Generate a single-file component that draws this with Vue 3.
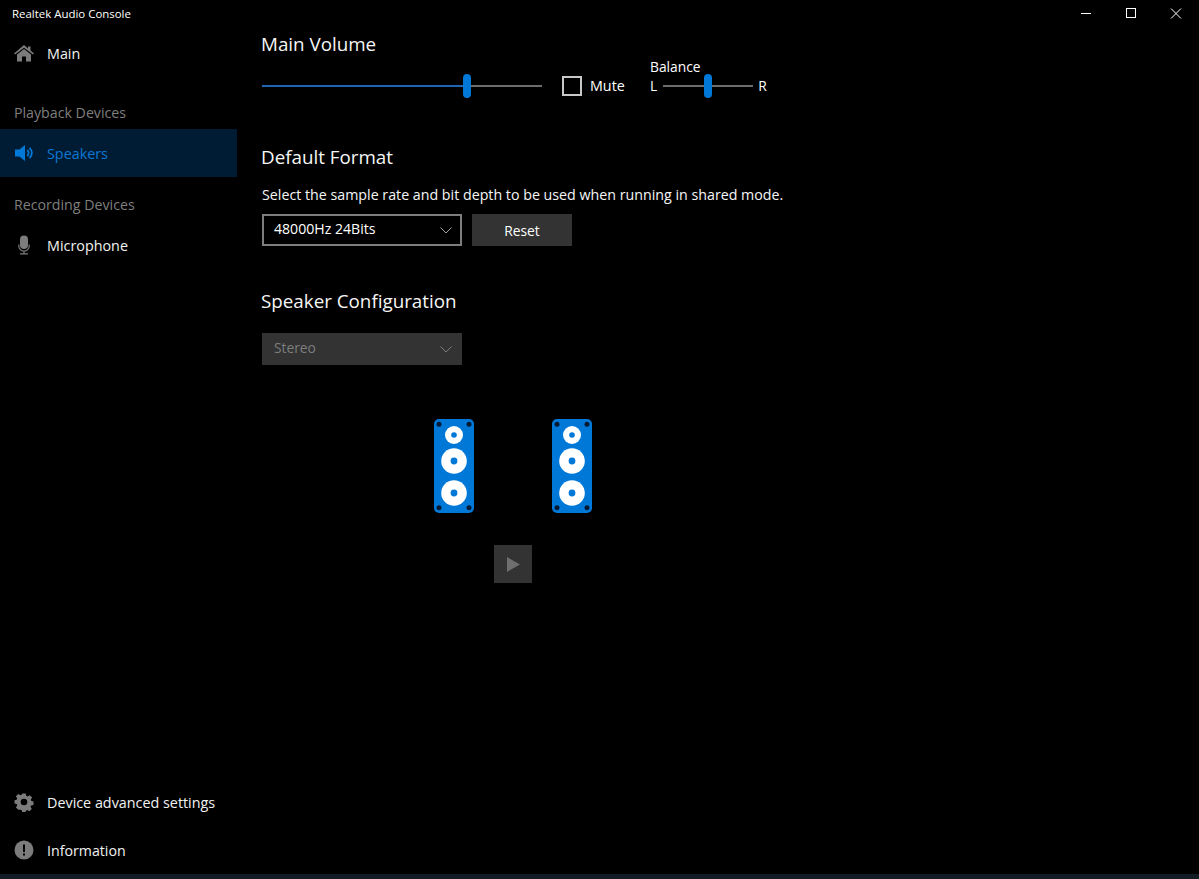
<script setup>
const speakers = ['left', 'right']
const screwPositions = [[5, 5.3], [35, 5.3], [5, 88.7], [35, 88.7]]
const cones = [
  { cy: 16, r: 9, hub: 2.800 },
  { cy: 42, r: 12.800, hub: 3.400 },
  { cy: 74, r: 12.800, hub: 3.400 }
]
</script>

<template>
  <div class="app">
    <div class="body">
      <aside class="sidebar">
        <div class="app-title">Realtek Audio Console</div>
        <div class="nav-item">
          <svg class="nav-icon" viewBox="0 0 20 20"><path fill="#7c7c7c" d="M10 2 0 10.500l1 1.100L10 4.800l9 6.800 1-1.100L16.500 7.500V3.500h-2.500v1.900zM3 11.500v7h5v-5h4v5h5v-7L10 6z"/></svg>
          <span>Main</span>
        </div>
        <div class="group-label first">Playback Devices</div>
        <div class="nav-item active">
          <svg class="nav-icon" viewBox="0 0 20 20"><path fill="#0078d7" d="M1 6.500h4.500L11 2v16l-5.500-4.500H1z"/><path fill="none" stroke="#0078d7" stroke-width="1.800" d="M13.300 7a4 4 0 0 1 0 6M15.500 4.800a7 7 0 0 1 0 10.400"/></svg>
          <span>Speakers</span>
        </div>
        <div class="group-label">Recording Devices</div>
        <div class="nav-item">
          <svg class="nav-icon" viewBox="0 0 20 20"><rect x="6" y="0.500" width="8" height="13.500" rx="4" fill="#7c7c7c"/><path fill="none" stroke="#7c7c7c" stroke-width="1.200" d="M4.800 9.500v1.500a5.200 5.200 0 0 0 10.400 0V9.500M10 16.200v2.300M6 18.900h8"/></svg>
          <span>Microphone</span>
        </div>
        <div class="spacer"></div>
        <div class="nav-item">
          <svg class="nav-icon" viewBox="0 0 20 20"><path fill="#7c7c7c" fill-rule="evenodd" d="M8.200 1h3.600l.5 2.500 1.500.7 2.200-1.400 2.500 2.500-1.400 2.200.7 1.500 2.200.5v3.600l-2.500.5-.7 1.500 1.400 2.200-2.500 2.500-2.200-1.400-1.500.7-.5 2.200H8.200l-.5-2.500-1.500-.7L4 18.200l-2.500-2.500 1.400-2.200-.7-1.500L0 11.500V8.200l2.200-.5.7-1.500L1.500 4 4 1.500l2.200 1.400 1.500-.7zM10 6.500a3.500 3.500 0 1 0 0 7 3.500 3.500 0 0 0 0-7z" transform="translate(.5 .5) scale(.95)"/></svg>
          <span>Device advanced settings</span>
        </div>
        <div class="nav-item">
          <svg class="nav-icon" viewBox="0 0 20 20"><circle cx="10" cy="10" r="9.500" fill="#7c7c7c"/><rect x="9" y="4.500" width="2" height="7.500" fill="#000"/><rect x="9" y="13.500" width="2" height="2" fill="#000"/></svg>
          <span class="info-label">Information</span>
        </div>
      </aside>

      <main class="content">
        <div class="window-controls">
          <svg class="win-btn" viewBox="0 0 46 27"><path stroke="#fff" d="M18 13.500h10"/></svg>
          <svg class="win-btn" viewBox="0 0 46 27"><rect x="18.500" y="8.500" width="9" height="9" fill="none" stroke="#fff"/></svg>
          <svg class="win-btn" viewBox="0 0 46 27"><path stroke="#fff" fill="none" d="M18 8.500l10 10M28 8.500l-10 10"/></svg>
        </div>

        <h2 class="heading volume-heading">Main Volume</h2>
        <div class="volume-row">
          <div class="slider volume-slider">
            <div class="track-fill"></div>
            <div class="thumb"></div>
            <div class="track-rest"></div>
          </div>
          <div class="checkbox"></div>
          <span class="mute-label">Mute</span>
          <div class="balance">
            <div class="balance-title">Balance</div>
            <div class="balance-line">
              <span>L</span>
              <div class="slider balance-slider">
                <div class="track-rest"></div>
                <div class="thumb"></div>
                <div class="track-rest"></div>
              </div>
              <span>R</span>
            </div>
          </div>
        </div>

        <h2 class="heading format-heading">Default Format</h2>
        <p class="description">Select the sample rate and bit depth to be used when running in shared mode.</p>
        <div class="format-row">
          <div class="select">
            <span class="select-text">48000Hz 24Bits</span>
            <svg class="chevron" viewBox="0 0 12 7"><path fill="none" stroke="#a8a8a8" stroke-width="1" d="M.5.500 6 6 11.500.500"/></svg>
          </div>
          <div class="button">Reset</div>
        </div>

        <h2 class="heading config-heading">Speaker Configuration</h2>
        <div class="select disabled">
          <span class="select-text">Stereo</span>
          <svg class="chevron" viewBox="0 0 12 7"><path fill="none" stroke="#7d7d7d" stroke-width="1" d="M.5.500 6 6 11.500.500"/></svg>
        </div>

        <div class="speakers">
          <svg v-for="s in speakers" :key="s" class="speaker" viewBox="0 0 40 94">
            <rect width="40" height="94" rx="5" fill="#0078d7"/>
            <circle v-for="(p, i) in screwPositions" :key="i" :cx="p[0]" :cy="p[1]" r="2.500" fill="#021a33"/>
            <template v-for="(c, i) in cones" :key="i">
              <circle cx="20" :cy="c.cy" :r="c.r" fill="#fff"/>
              <circle cx="20" :cy="c.cy" :r="c.hub" fill="#0078d7"/>
            </template>
          </svg>
        </div>

        <div class="play-button">
          <svg viewBox="0 0 14 16"><path fill="#6f6f6f" d="M0 0l14 8-14 8z"/></svg>
        </div>
      </main>
    </div>
    <div class="taskbar-edge"></div>
  </div>
</template>

<style scoped>
.app {
  width: 1199px;
  height: 879px;
  background: #000;
  color: #fff;
  font-family: "Open Sans", "Noto Sans", sans-serif;
  font-size: 14px;
  display: flex;
  flex-direction: column;
  overflow: hidden;
}
.body {
  flex: 1;
  display: flex;
  min-height: 0;
}
.sidebar {
  width: 237px;
  flex: none;
  display: flex;
  flex-direction: column;
}
.app-title {
  height: 29px;
  box-sizing: border-box;
  padding: 6px 0 0 12px;
  font-size: 11.450px;
  line-height: 16px;
}
.nav-item {
  height: 48px;
  display: flex;
  align-items: center;
  font-size: 14.350px;
  color: #f2f2f2;
}
.info-label {
  font-size: 14.200px;
}
.nav-icon {
  width: 20px;
  height: 20px;
  margin: 0 13px 0 14px;
  flex: none;
}
.nav-item.active {
  background: #001c35;
  color: #0a78d6;
}
.group-label {
  height: 44px;
  display: flex;
  align-items: flex-end;
  padding: 0 0 7px 14px;
  box-sizing: border-box;
  color: #7f7f7f;
  font-size: 14.200px;
}
.group-label.first {
  height: 52px;
}
.spacer {
  flex: 1;
}
.content {
  flex: 1;
  position: relative;
  padding-left: 24px;
  display: flex;
  flex-direction: column;
  align-items: flex-start;
}
.window-controls {
  position: absolute;
  top: 0;
  right: 0;
  display: flex;
  gap: 0;
}
.win-btn {
  width: 46px;
  height: 27px;
  margin-left: -1px;
}
.heading {
  margin: 0;
  font-weight: 400;
  font-size: 18.800px;
  line-height: 24px;
  color: #f6f6f6;
}
.volume-heading {
  margin-top: 32px;
}
.volume-row {
  display: flex;
  align-items: flex-start;
  margin: 0 0 0 1px;
  height: 45px;
}
.slider {
  display: flex;
  align-items: center;
  height: 24px;
}
.volume-slider {
  width: 280px;
  margin-top: 18px;
}
.track-fill {
  width: 201px;
  height: 2px;
  background: #1f65b4;
}
.track-rest {
  flex: 1;
  height: 2px;
  background: #6d6d6d;
}
.thumb {
  width: 8px;
  height: 24px;
  border-radius: 4px;
  background: #0078d7;
  flex: none;
}
.checkbox {
  width: 20px;
  height: 20px;
  box-sizing: border-box;
  border: 2px solid #c8c8c8;
  margin: 20px 0 0 20px;
}
.mute-label {
  margin: 19px 0 0 8px;
  font-size: 14.300px;
  line-height: 22px;
  width: 60px;
}
.balance {
  font-size: 13.800px;
}
.balance-title {
  line-height: 20px;
  margin-top: 1px;
}
.balance-line {
  display: flex;
  align-items: center;
  line-height: 20px;
  margin-top: -3px;
}
.balance-slider {
  width: 90px;
  margin: 0 5px 0 6px;
}
.format-heading {
  margin-top: 44px;
}
.description {
  margin: 16px 0 0 1px;
  font-size: 14.240px;
  line-height: 20px;
  white-space: nowrap;
  color: #f6f6f6;
}
.format-row {
  display: flex;
  gap: 10px;
  margin: 9px 0 0 1px;
}
.select {
  width: 200px;
  height: 32px;
  box-sizing: border-box;
  border: 2px solid #7d7d7d;
  padding: 0 8px 0 10px;
  display: flex;
  align-items: center;
  justify-content: space-between;
  font-size: 14.100px;
}
.select-text {
  line-height: 20px;
  padding-bottom: 2px;
}
.chevron {
  width: 12px;
  height: 7px;
}
.select.disabled {
  border: none;
  background: #333;
  color: #7d7d7d;
  padding: 0 10px 0 12px;
  margin: 20px 0 0 1px;
  font-size: 13.800px;
}
.button {
  width: 100px;
  height: 32px;
  background: #333;
  display: flex;
  align-items: center;
  justify-content: center;
  font-size: 13.800px;
}
.config-heading {
  margin-top: 43px;
}
.speakers {
  display: flex;
  gap: 78px;
  margin: 54px 0 0 173px;
}
.speaker {
  width: 40px;
  height: 94px;
  display: block;
}
.play-button {
  width: 38px;
  height: 38px;
  background: #333;
  margin: 32px 0 0 233px;
  display: flex;
  align-items: center;
  justify-content: center;
}
.play-button svg {
  width: 13px;
  height: 15px;
}
.taskbar-edge {
  height: 5px;
  background: #131b24;
  flex: none;
}
</style>

<style>
html, body { background: #000; margin: 0; }
</style>
